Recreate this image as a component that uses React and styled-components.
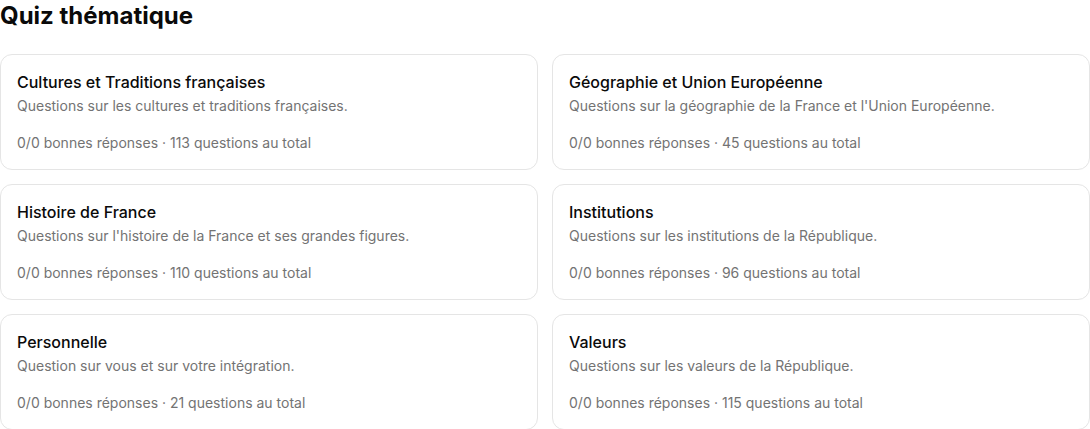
import React from "react";
import styled, { createGlobalStyle } from "styled-components";

const GlobalStyle = createGlobalStyle`
  * {
    box-sizing: border-box;
  }
  body {
    margin: 0;
    background: #ffffff;
    font-family: Inter, "Noto Sans", sans-serif;
    color: #0a0a0a;
  }
`;

const Page = styled.section`
  width: 1090px;
`;

const Heading = styled.h2`
  margin: 0 0 22px 0;
  font-size: 24px;
  line-height: 32px;
  font-weight: 700;
  color: #0a0a0a;
`;

const Grid = styled.div`
  display: grid;
  grid-template-columns: repeat(2, 1fr);
  gap: 14px;
`;

const Card = styled.a`
  display: flex;
  flex-direction: column;
  height: 116px;
  padding: 16px;
  border: 1px solid #e5e5e5;
  border-radius: 12px;
  background: #fff;
  color: inherit;
  text-decoration: none;
  cursor: pointer;
`;

const Title = styled.h3`
  margin: 0;
  font-size: 16px;
  line-height: 22px;
  font-weight: 500;
  color: #0a0a0a;
`;

const Description = styled.p`
  margin: 3px 0 0 0;
  font-size: 14px;
  line-height: 20px;
  color: #737373;
`;

const Stats = styled.p`
  margin: 17px 0 0 0;
  font-size: 14px;
  line-height: 20px;
  color: #737373;
`;

const quizzes = [
  {
    name: "Cultures et Traditions françaises",
    description: "Questions sur les cultures et traditions françaises.",
    total: 113,
  },
  {
    name: "Géographie et Union Européenne",
    description:
      "Questions sur la géographie de la France et l'Union Européenne.",
    total: 45,
  },
  {
    name: "Histoire de France",
    description: "Questions sur l'histoire de la France et ses grandes figures.",
    total: 110,
  },
  {
    name: "Institutions",
    description: "Questions sur les institutions de la République.",
    total: 96,
  },
  {
    name: "Personnelle",
    description: "Question sur vous et sur votre intégration.",
    total: 21,
  },
  {
    name: "Valeurs",
    description: "Questions sur les valeurs de la République.",
    total: 115,
  },
];

const App = () => {
  return (
    <>
      <GlobalStyle />
      <Page>
        <Heading>Quiz thématique</Heading>
        <Grid>
          {quizzes.map((quiz) => (
            <Card key={quiz.name}>
              <Title>{quiz.name}</Title>
              <Description>{quiz.description}</Description>
              <Stats>
                0/0 bonnes réponses · {quiz.total} questions au total
              </Stats>
            </Card>
          ))}
        </Grid>
      </Page>
    </>
  );
};

export default App;
